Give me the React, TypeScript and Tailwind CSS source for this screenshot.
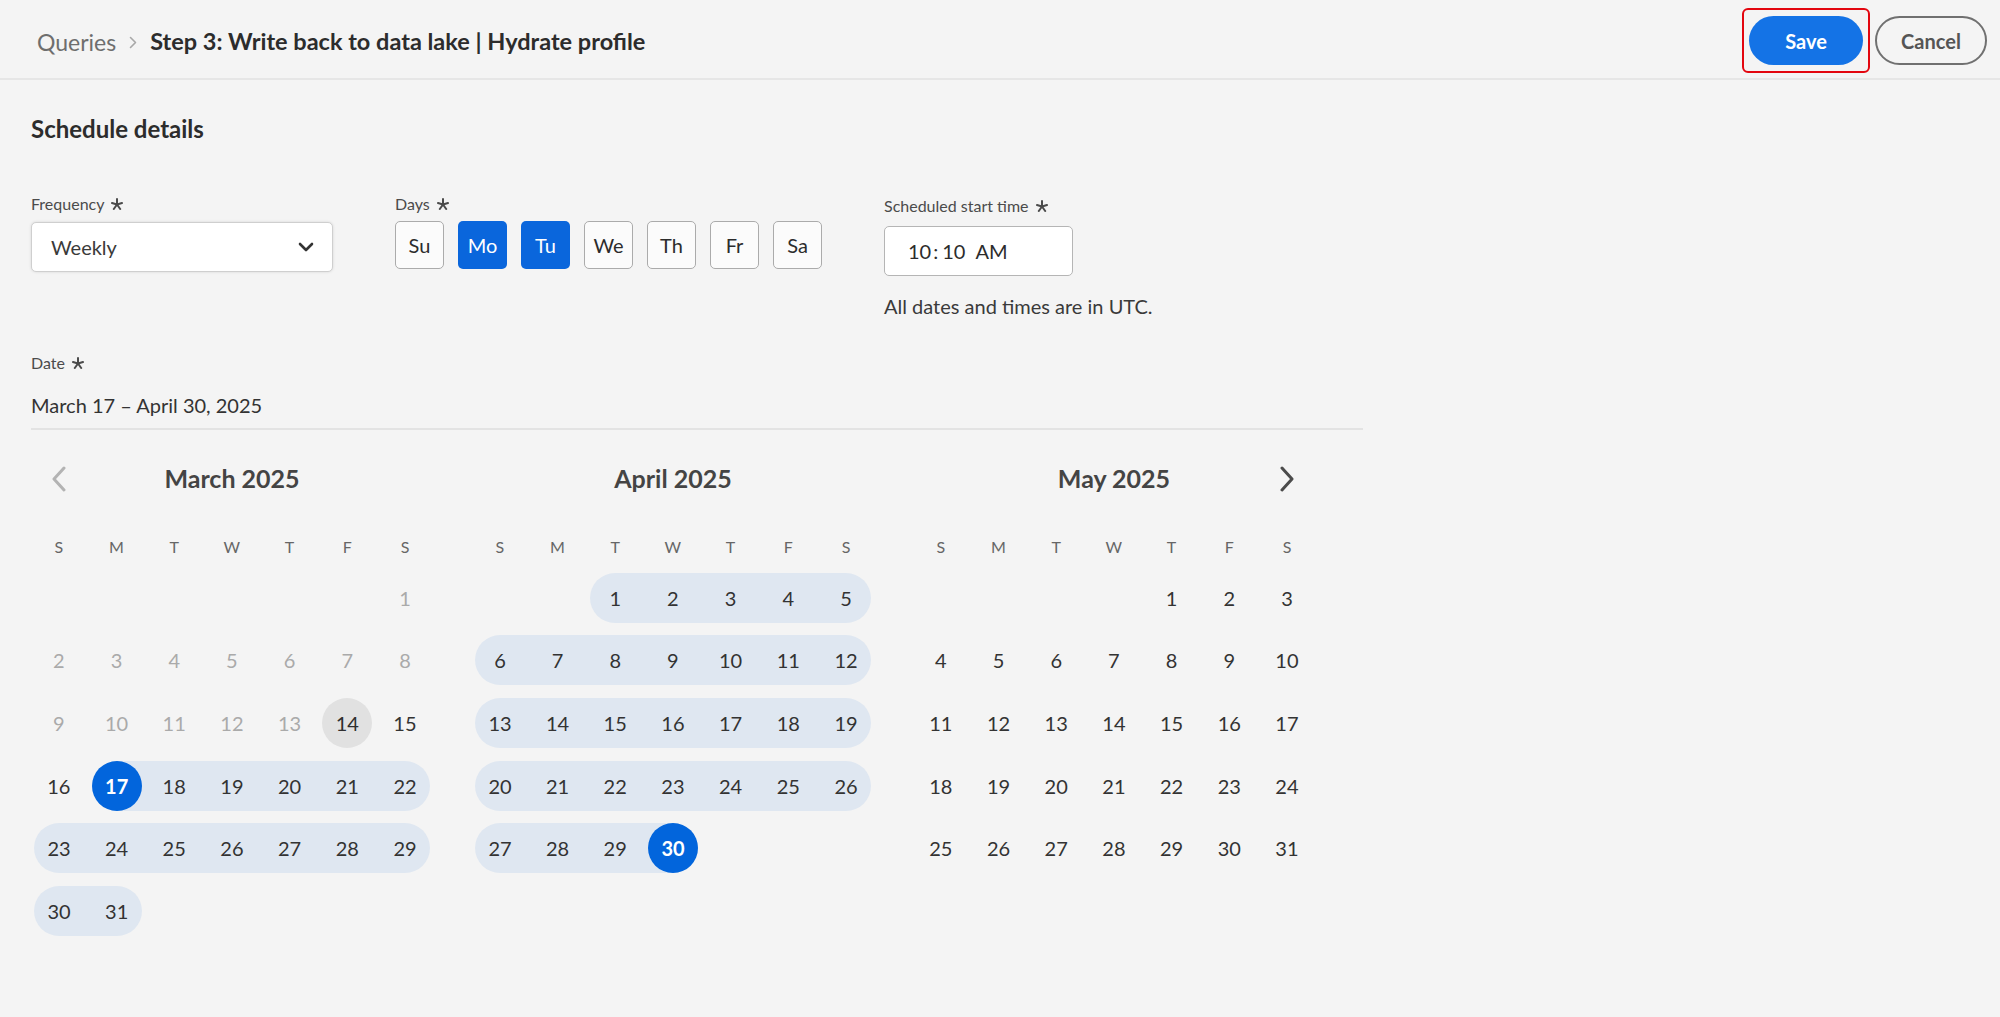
import React from 'react';
import clsx from 'clsx';

type MonthSpec = {
  name: string;
  startCol: number;
  days: number;
  disabledUpTo: number;
  today?: number;
  rangeFrom?: number;
  rangeTo?: number;
  selStart?: number;
  selEnd?: number;
  prev?: boolean;
  next?: boolean;
};

const months: MonthSpec[] = [
  { name: 'March 2025', startCol: 6, days: 31, disabledUpTo: 13, today: 14, rangeFrom: 17, rangeTo: 31, selStart: 17, prev: true },
  { name: 'April 2025', startCol: 2, days: 30, disabledUpTo: 0, rangeFrom: 1, rangeTo: 30, selEnd: 30 },
  { name: 'May 2025', startCol: 4, days: 31, disabledUpTo: 0, next: true },
];

function Asterisk() {
  return (
    <svg width="12" height="12" viewBox="0 0 12 12" className="inline-block ml-[7px] mb-[1px]">
      <g stroke="#4b4b4b" strokeWidth="2" strokeLinecap="round" fill="none">
        <line x1="6" y1="6.5" x2="6" y2="1" />
        <line x1="6" y1="6.5" x2="1" y2="5" />
        <line x1="6" y1="6.5" x2="11" y2="5" />
        <line x1="6" y1="6.5" x2="2.8" y2="11" />
        <line x1="6" y1="6.5" x2="9.2" y2="11" />
      </g>
    </svg>
  );
}

function Chevron({ dir, color }: { dir: 'left' | 'right'; color: string }) {
  return (
    <svg width="16" height="26" viewBox="0 0 16 26">
      <path
        d={dir === 'left' ? 'M13 2 L3 13 L13 24' : 'M3 2 L13 13 L3 24'}
        stroke={color}
        strokeWidth="3"
        strokeLinecap="round"
        strokeLinejoin="round"
        fill="none"
      />
    </svg>
  );
}

function DayCell({ m, day, col }: { m: MonthSpec; day: number | null; col: number }) {
  if (day === null) return <div className="w-[57.7px] h-[50px]" />;
  const inRange = m.rangeFrom !== undefined && m.rangeTo !== undefined && day >= m.rangeFrom && day <= m.rangeTo;
  const bandStart = inRange && (col === 0 || day === 1 || day === m.rangeFrom);
  const bandEnd = inRange && (col === 6 || day === m.days || day === m.rangeTo);
  const selected = day === m.selStart || day === m.selEnd;
  const disabled = day <= m.disabledUpTo;
  const today = day === m.today;
  return (
    <div className="w-[57.7px] h-[50px] flex">
      <div
        className={clsx(
          'flex-1 flex items-center justify-center',
          inRange && 'bg-[#dfe7f1]',
          bandStart && 'ml-[4px] pr-[4px] rounded-l-full',
          bandEnd && 'mr-[4px] pl-[4px] rounded-r-full'
        )}
      >
        <div
          className={clsx(
            'w-[50px] h-[50px] shrink-0 rounded-full flex items-center justify-center text-[20px]',
            selected && 'bg-[#0265dc] text-white font-bold',
            today && 'bg-[#e1e1e1] text-[#2f2f2f]',
            !selected && !today && (disabled ? 'text-[#aaaaaa]' : 'text-[#333333]')
          )}
        >
          {day}
        </div>
      </div>
    </div>
  );
}

function Month({ m }: { m: MonthSpec }) {
  const cells: (number | null)[] = [];
  for (let i = 0; i < m.startCol; i++) cells.push(null);
  for (let d = 1; d <= m.days; d++) cells.push(d);
  while (cells.length % 7 !== 0) cells.push(null);
  const weeks: (number | null)[][] = [];
  for (let i = 0; i < cells.length; i += 7) weeks.push(cells.slice(i, i + 7));
  return (
    <div className="w-[404px] flex flex-col">
      <div className="h-[50px] flex items-center">
        <div className="w-[57.7px] flex justify-center">
          {m.prev && <Chevron dir="left" color="#b3b3b3" />}
        </div>
        <div className="flex-1 text-center text-[25px] font-bold text-[#444444]">{m.name}</div>
        <div className="w-[57.7px] flex justify-center">
          {m.next && <Chevron dir="right" color="#4b4b4b" />}
        </div>
      </div>
      <div className="flex mt-[31px] h-[24px] items-center">
        {['S', 'M', 'T', 'W', 'T', 'F', 'S'].map((d, i) => (
          <div key={i} className="w-[57.7px] text-center text-[16px] text-[#666666]">
            {d}
          </div>
        ))}
      </div>
      <div className="flex flex-col gap-[12.7px] mt-[13.6px]">
        {weeks.map((w, wi) => (
          <div key={wi} className="flex">
            {w.map((d, ci) => (
              <DayCell key={ci} m={m} day={d} col={ci} />
            ))}
          </div>
        ))}
      </div>
    </div>
  );
}

export default function App() {
  const dayBtns = ['Su', 'Mo', 'Tu', 'We', 'Th', 'Fr', 'Sa'];
  return (
    <div className="w-[2000px] h-[1017px] bg-[#f4f4f4] font-[Lato,sans-serif] text-[#2c2c2c] overflow-hidden">
      <header className="h-[80px] border-b-2 border-[#e6e6e6] flex items-center justify-between pl-[37px] pr-[13px]">
        <div className="flex items-center pt-[6px]">
          <span className="text-[23px] text-[#6e6e6e]">Queries</span>
          <svg width="8" height="13" viewBox="0 0 8 13" className="mx-[13px]">
            <path d="M1.5 1.5 L6.5 6.5 L1.5 11.5" stroke="#a8a8a8" strokeWidth="1.6" fill="none" strokeLinecap="round" strokeLinejoin="round" />
          </svg>
          <span className="text-[23.5px] font-bold text-[#2c2c2c]">Step 3: Write back to data lake | Hydrate profile</span>
        </div>
        <div className="flex items-center gap-[5px] pt-[3px]">
          <div className="border-2 border-[#e3060f] rounded-[6px] px-[5px] py-[6px]">
            <button className="w-[114px] h-[49px] rounded-full bg-[#1473e6] text-white text-[20px] font-bold">Save</button>
          </div>
          <button className="w-[112px] h-[49px] rounded-full border-2 border-[#707070] text-[#555555] text-[20px] font-bold">Cancel</button>
        </div>
      </header>

      <main className="pl-[31px] pt-[34px]">
        <h1 className="text-[24px] leading-[30px] font-bold text-[#2c2c2c]">Schedule details</h1>

        <div className="flex gap-[62px] mt-[50px] items-start">
          <div className="flex flex-col w-[302px]">
            <div className="h-[20px] flex items-center text-[16px] text-[#4b4b4b]">
              Frequency
              <Asterisk />
            </div>
            <div className="mt-[8px] h-[50px] bg-white border border-[#cfcfcf] rounded-[5px] shadow-[0_0_3px_rgba(0,0,0,0.12)] flex items-center justify-between pl-[19px] pr-[18px]">
              <span className="text-[20px] text-[#3a3a3a]">Weekly</span>
              <svg width="16" height="10" viewBox="0 0 16 10">
                <path d="M2 2 L8 8 L14 2" stroke="#333333" strokeWidth="2.6" fill="none" strokeLinecap="round" strokeLinejoin="round" />
              </svg>
            </div>
          </div>

          <div className="flex flex-col">
            <div className="h-[20px] flex items-center text-[16px] text-[#4b4b4b]">
              Days
              <Asterisk />
            </div>
            <div className="mt-[7px] flex gap-[14px]">
              {dayBtns.map((d) => {
                const sel = d === 'Mo' || d === 'Tu';
                return (
                  <div
                    key={d}
                    className={clsx(
                      'w-[49px] h-[48px] rounded-[5px] flex items-center justify-center text-[20px]',
                      sel ? 'bg-[#0a66dc] text-white' : 'bg-[#fbfbfb] border border-[#ababab] text-[#2c2c2c]'
                    )}
                  >
                    {d}
                  </div>
                );
              })}
            </div>
          </div>

          <div className="flex flex-col pt-[2px]">
            <div className="h-[20px] flex items-center text-[16px] text-[#4b4b4b]">
              Scheduled start time
              <Asterisk />
            </div>
            <div className="mt-[10px] w-[189px] h-[50px] bg-white border border-[#b5b5b5] rounded-[5px] flex items-center pl-[23px] text-[20px] text-[#2c2c2c]">
              <span>10</span>
              <span className="ml-[2px]">:</span>
              <span className="ml-[4px]">10</span>
              <span className="ml-[10px]">AM</span>
            </div>
            <div className="mt-[17px] text-[20px] leading-[26px] text-[#3a3a3a]">All dates and times are in UTC.</div>
          </div>
        </div>

        <div className="mt-[34px] h-[20px] flex items-center text-[16px] text-[#4b4b4b]">
          Date
          <Asterisk />
        </div>
        <div className="w-[1332px] border-b-2 border-[#e3e3e3] mt-[19px] pb-[10px] text-[20px] leading-[26px] text-[#333333]">
          March 17 – April 30, 2025
        </div>

        <div className="flex gap-[37px] mt-[24px] -ml-[1px]">
          {months.map((m) => (
            <Month key={m.name} m={m} />
          ))}
        </div>
      </main>
    </div>
  );
}
